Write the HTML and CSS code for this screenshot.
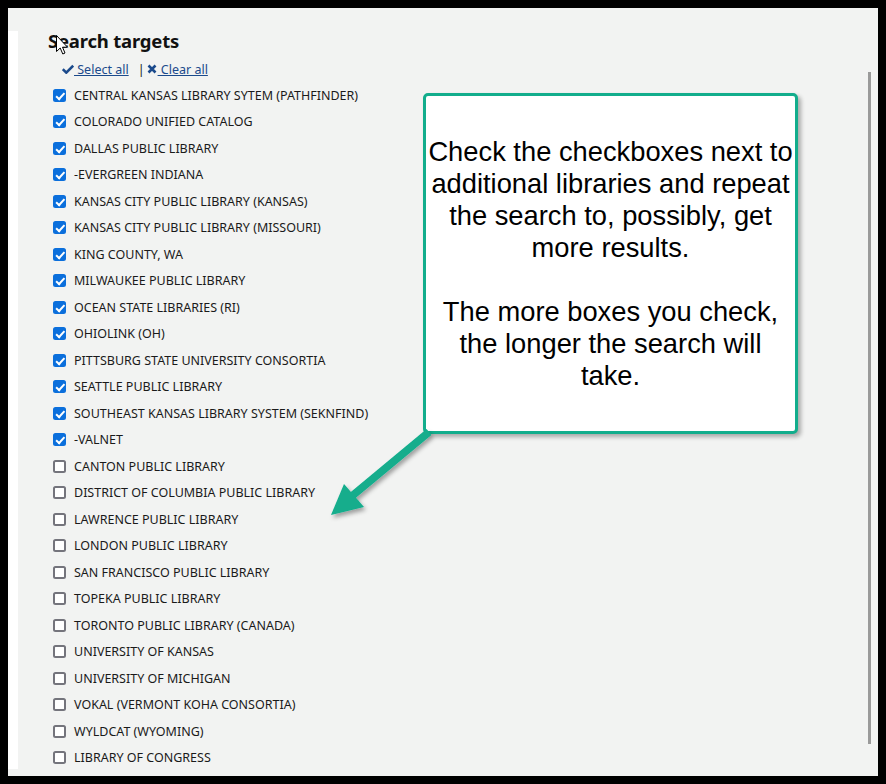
FILE: index.html
```html
<!DOCTYPE html>
<html>
<head>
<meta charset="utf-8">
<link rel="stylesheet" href="styles.css">
</head>
<body>
<div class="frame">
  <div class="strip"></div>
  <div class="main">
    <h2 class="title">Search targets</h2>
    <div class="links">
      <a href="#" class="lnk"><svg class="ico" viewBox="0 0 12 10" width="12" height="10"><path d="M0.8 5.2 L4.3 8.6 L11.2 1.6" fill="none" stroke="#1b4a8c" stroke-width="2.6"/></svg> Select all</a>
      <span class="sep">|</span>
      <a href="#" class="lnk"><svg class="ico x" viewBox="0 0 10 10" width="10" height="10"><path d="M1.5 1.5 L8.5 8.5 M8.5 1.5 L1.5 8.5" fill="none" stroke="#1b4a8c" stroke-width="2.6"/></svg> Clear all</a>
    </div>
    <ul class="list">
      <li><span class="box on"></span>CENTRAL KANSAS LIBRARY SYTEM (PATHFINDER)</li>
      <li><span class="box on"></span>COLORADO UNIFIED CATALOG</li>
      <li><span class="box on"></span>DALLAS PUBLIC LIBRARY</li>
      <li><span class="box on"></span>-EVERGREEN INDIANA</li>
      <li><span class="box on"></span>KANSAS CITY PUBLIC LIBRARY (KANSAS)</li>
      <li><span class="box on"></span>KANSAS CITY PUBLIC LIBRARY (MISSOURI)</li>
      <li><span class="box on"></span>KING COUNTY, WA</li>
      <li><span class="box on"></span>MILWAUKEE PUBLIC LIBRARY</li>
      <li><span class="box on"></span>OCEAN STATE LIBRARIES (RI)</li>
      <li><span class="box on"></span>OHIOLINK (OH)</li>
      <li><span class="box on"></span>PITTSBURG STATE UNIVERSITY CONSORTIA</li>
      <li><span class="box on"></span>SEATTLE PUBLIC LIBRARY</li>
      <li><span class="box on"></span>SOUTHEAST KANSAS LIBRARY SYSTEM (SEKNFIND)</li>
      <li><span class="box on"></span>-VALNET</li>
      <li><span class="box"></span>CANTON PUBLIC LIBRARY</li>
      <li><span class="box"></span>DISTRICT OF COLUMBIA PUBLIC LIBRARY</li>
      <li><span class="box"></span>LAWRENCE PUBLIC LIBRARY</li>
      <li><span class="box"></span>LONDON PUBLIC LIBRARY</li>
      <li><span class="box"></span>SAN FRANCISCO PUBLIC LIBRARY</li>
      <li><span class="box"></span>TOPEKA PUBLIC LIBRARY</li>
      <li><span class="box"></span>TORONTO PUBLIC LIBRARY (CANADA)</li>
      <li><span class="box"></span>UNIVERSITY OF KANSAS</li>
      <li><span class="box"></span>UNIVERSITY OF MICHIGAN</li>
      <li><span class="box"></span>VOKAL (VERMONT KOHA CONSORTIA)</li>
      <li><span class="box"></span>WYLDCAT (WYOMING)</li>
      <li><span class="box"></span>LIBRARY OF CONGRESS</li>
    </ul>
  </div>
  <div class="scroll"></div>
</div>

<div class="callout">
  <p>Check the checkboxes next to additional libraries and repeat the search to, possibly, get more results.</p>
  <p class="gap">The more boxes you check, the longer the search will take.</p>
</div>

<svg class="arrow" width="886" height="784" viewBox="0 0 886 784">
  <defs>
    <filter id="sh" x="-20%" y="-20%" width="140%" height="140%">
      <feDropShadow dx="2" dy="3" stdDeviation="2" flood-color="#000" flood-opacity="0.35"/>
    </filter>
  </defs>
  <g filter="url(#sh)">
    <line x1="429" y1="432" x2="352" y2="496" stroke="#12ad8c" stroke-width="7.5"/>
    <polygon points="331,515 344,484 364,507" fill="#12ad8c"/>
  </g>
</svg>

<svg class="cursor" width="13" height="21" viewBox="0 0 13 21">
  <path d="M0.5 0.5 L0.5 16.5 L4.2 13 L6.8 19 L9 18 L6.5 12.2 L11.5 12.2 Z" fill="#fff" stroke="#000" stroke-width="1" stroke-linejoin="round"/>
</svg>
</body>
</html>
```

FILE: styles.css
```css
html, body {
  margin: 0;
  padding: 0;
}
body {
  background: #000;
  width: 886px;
  height: 784px;
  overflow: hidden;
  position: relative;
  font-family: "Noto Sans", "Open Sans", sans-serif;
}
.frame {
  margin: 8px;
  height: 768px;
  background: #f2f3f2;
  display: flex;
  align-items: stretch;
}
.strip {
  width: 10px;
  background: #fff;
  margin-top: 23px;
  margin-bottom: 7px;
  flex: none;
}
.main {
  flex: 1;
  padding-left: 30px;
}
.title {
  margin: 0;
  padding-top: 21px;
  font-size: 18.5px;
  line-height: 24px;
  font-weight: 700;
  color: #111;
  letter-spacing: -0.2px;
}
.links {
  margin-top: 7px;
  padding-left: 14px;
  display: flex;
  align-items: center;
  height: 18px;
  font-size: 12.5px;
}
.lnk {
  color: #1b4a8c;
  text-decoration: underline;
  display: inline-flex;
  align-items: center;
  white-space: pre;
}
.ico.x {
  margin-right: 1px;
}
.sep {
  margin: 0 2px 0 9px;
  color: #222;
}
.list {
  list-style: none;
  margin: 4px 0 0 0;
  padding: 0 0 0 5px;
}
.list li {
  height: 26.5px;
  display: flex;
  align-items: center;
  font-size: 12.5px;
  color: #1a1a1a;
}
.box {
  width: 13px;
  height: 13px;
  box-sizing: border-box;
  border: 2px solid #74747c;
  border-radius: 2.5px;
  background: #fff;
  margin-right: 8px;
  flex: none;
  position: relative;
}
.box.on {
  background: #0b6fdc;
  border-color: #0b6fdc;
}
.box.on::after {
  content: "";
  position: absolute;
  left: 2.8px;
  top: 0px;
  width: 3px;
  height: 6.5px;
  border: solid #fff;
  border-width: 0 2px 2px 0;
  transform: rotate(42deg);
}
.scroll {
  width: 3px;
  background: #9a9a9a;
  margin-top: 64px;
  margin-bottom: 32px;
  margin-right: 7px;
  flex: none;
}
.callout {
  position: absolute;
  left: 423px;
  top: 93px;
  width: 375px;
  height: 341px;
  box-sizing: border-box;
  border: 3.5px solid #12ad8c;
  border-radius: 5px;
  background: #fff;
  box-shadow: 3px 3px 4px rgba(0,0,0,0.3);
  display: flex;
  flex-direction: column;
  justify-content: center;
  align-items: center;
  text-align: center;
  font-family: "Liberation Sans", Arial, sans-serif;
  font-size: 27.3px;
  line-height: 32px;
  color: #000;
  padding: 0 2px;
}
.callout p {
  margin: 0;
}
.callout .gap {
  margin-top: 32px;
}
.arrow {
  position: absolute;
  left: 0;
  top: 0;
  pointer-events: none;
}
.cursor {
  position: absolute;
  left: 56px;
  top: 35px;
}
```
